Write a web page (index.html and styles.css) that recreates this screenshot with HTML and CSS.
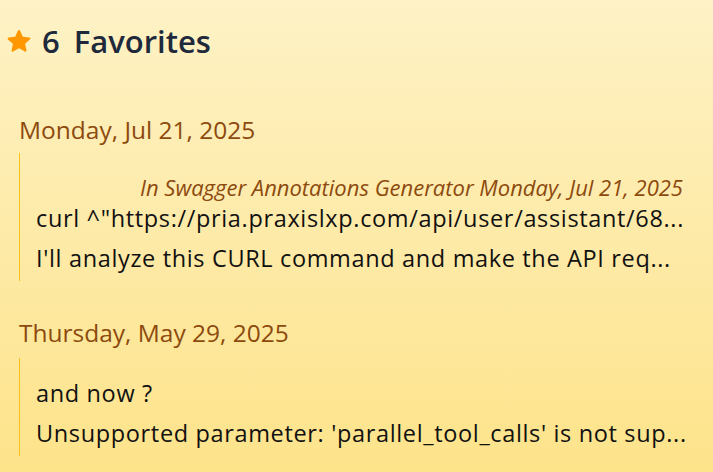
FILE: index.html
```html
<!DOCTYPE html>
<html lang="en">
<head>
<meta charset="utf-8">
<title>Favorites</title>
<link rel="stylesheet" href="styles.css">
</head>
<body>
<main class="page">
  <header class="header">
    <svg class="star" viewBox="0 0 24 24" aria-hidden="true">
      <path d="M12 1.8c.4 0 .75.23.92.6l2.6 5.6 6.1.7c.4.05.74.33.86.72.12.38 0 .8-.3 1.07l-4.55 4.150 1.25 6.05c.08.4-.08.8-.4 1.04-.33.23-.76.25-1.1.06L12 18.75l-5.38 3.04c-.35.2-.78.17-1.100-.06-.33-.24-.49-.64-.4-1.040l1.24-6.05L1.82 10.5c-.3-.27-.42-.69-.3-1.07.12-.39.46-.67.86-.72l6.1-.7 2.6-5.6c.17-.37.52-.6.92-.6z"/>
    </svg>
    <span class="count">6</span>
    <h1 class="title">Favorites</h1>
  </header>

  <section class="group">
    <h2 class="date">Monday, Jul 21, 2025</h2>
    <div class="entry">
      <div class="meta">In Swagger Annotations Generator Monday, Jul 21, 2025</div>
      <p class="line">curl ^"https://pria.praxislxp.com/api/user/assistant/68...</p>
      <p class="line">I'll analyze this CURL command and make the API req...</p>
    </div>
  </section>

  <section class="group">
    <h2 class="date">Thursday, May 29, 2025</h2>
    <div class="entry">
      <p class="line">and now ?</p>
      <p class="line">Unsupported parameter: 'parallel_tool_calls' is not sup...</p>
    </div>
  </section>
</main>
</body>
</html>
```

FILE: styles.css
```css
html, body {
  margin: 0;
  padding: 0;
  height: 100%;
}

body {
  background: linear-gradient(180deg, #fef2c6 0%, #fde38a 100%);
  font-family: "Open Sans", "Noto Sans", sans-serif;
  color: #111111;
}

.page {
  padding: 21px 30px 0 19px;
}

.header {
  display: flex;
  align-items: center;
  gap: 10px;
  margin-left: -13px;
  height: 40px;
}

.star {
  width: 26px;
  height: 26px;
  fill: #ff9800;
  flex: none;
}

.count,
.title {
  font-size: 31px;
  font-weight: 600;
  color: #1e293b;
  margin: 0;
  line-height: 40px;
}

.count {
  margin-right: 4px;
}

.group {
  margin-top: 54px;
}

.group + .group {
  margin-top: 37px;
}

.date {
  margin: 0 0 8px;
  font-size: 24.5px;
  font-weight: 400;
  line-height: 30px;
  color: #8d4a0e;
}

.group + .group .date {
  margin-bottom: 10px;
}

.entry {
  border-left: 1px solid #f6c21a;
  padding: 19px 0 7px 16px;
  display: flex;
  flex-direction: column;
  gap: 8px;
}

.meta {
  font-style: italic;
  font-size: 22px;
  line-height: 30px;
  color: #8d4a0e;
  text-align: right;
  margin-bottom: -8px;
  white-space: nowrap;
}

.line {
  margin: 0;
  font-size: 23.5px;
  line-height: 32px;
  letter-spacing: 0.65px;
  white-space: nowrap;
}
```
